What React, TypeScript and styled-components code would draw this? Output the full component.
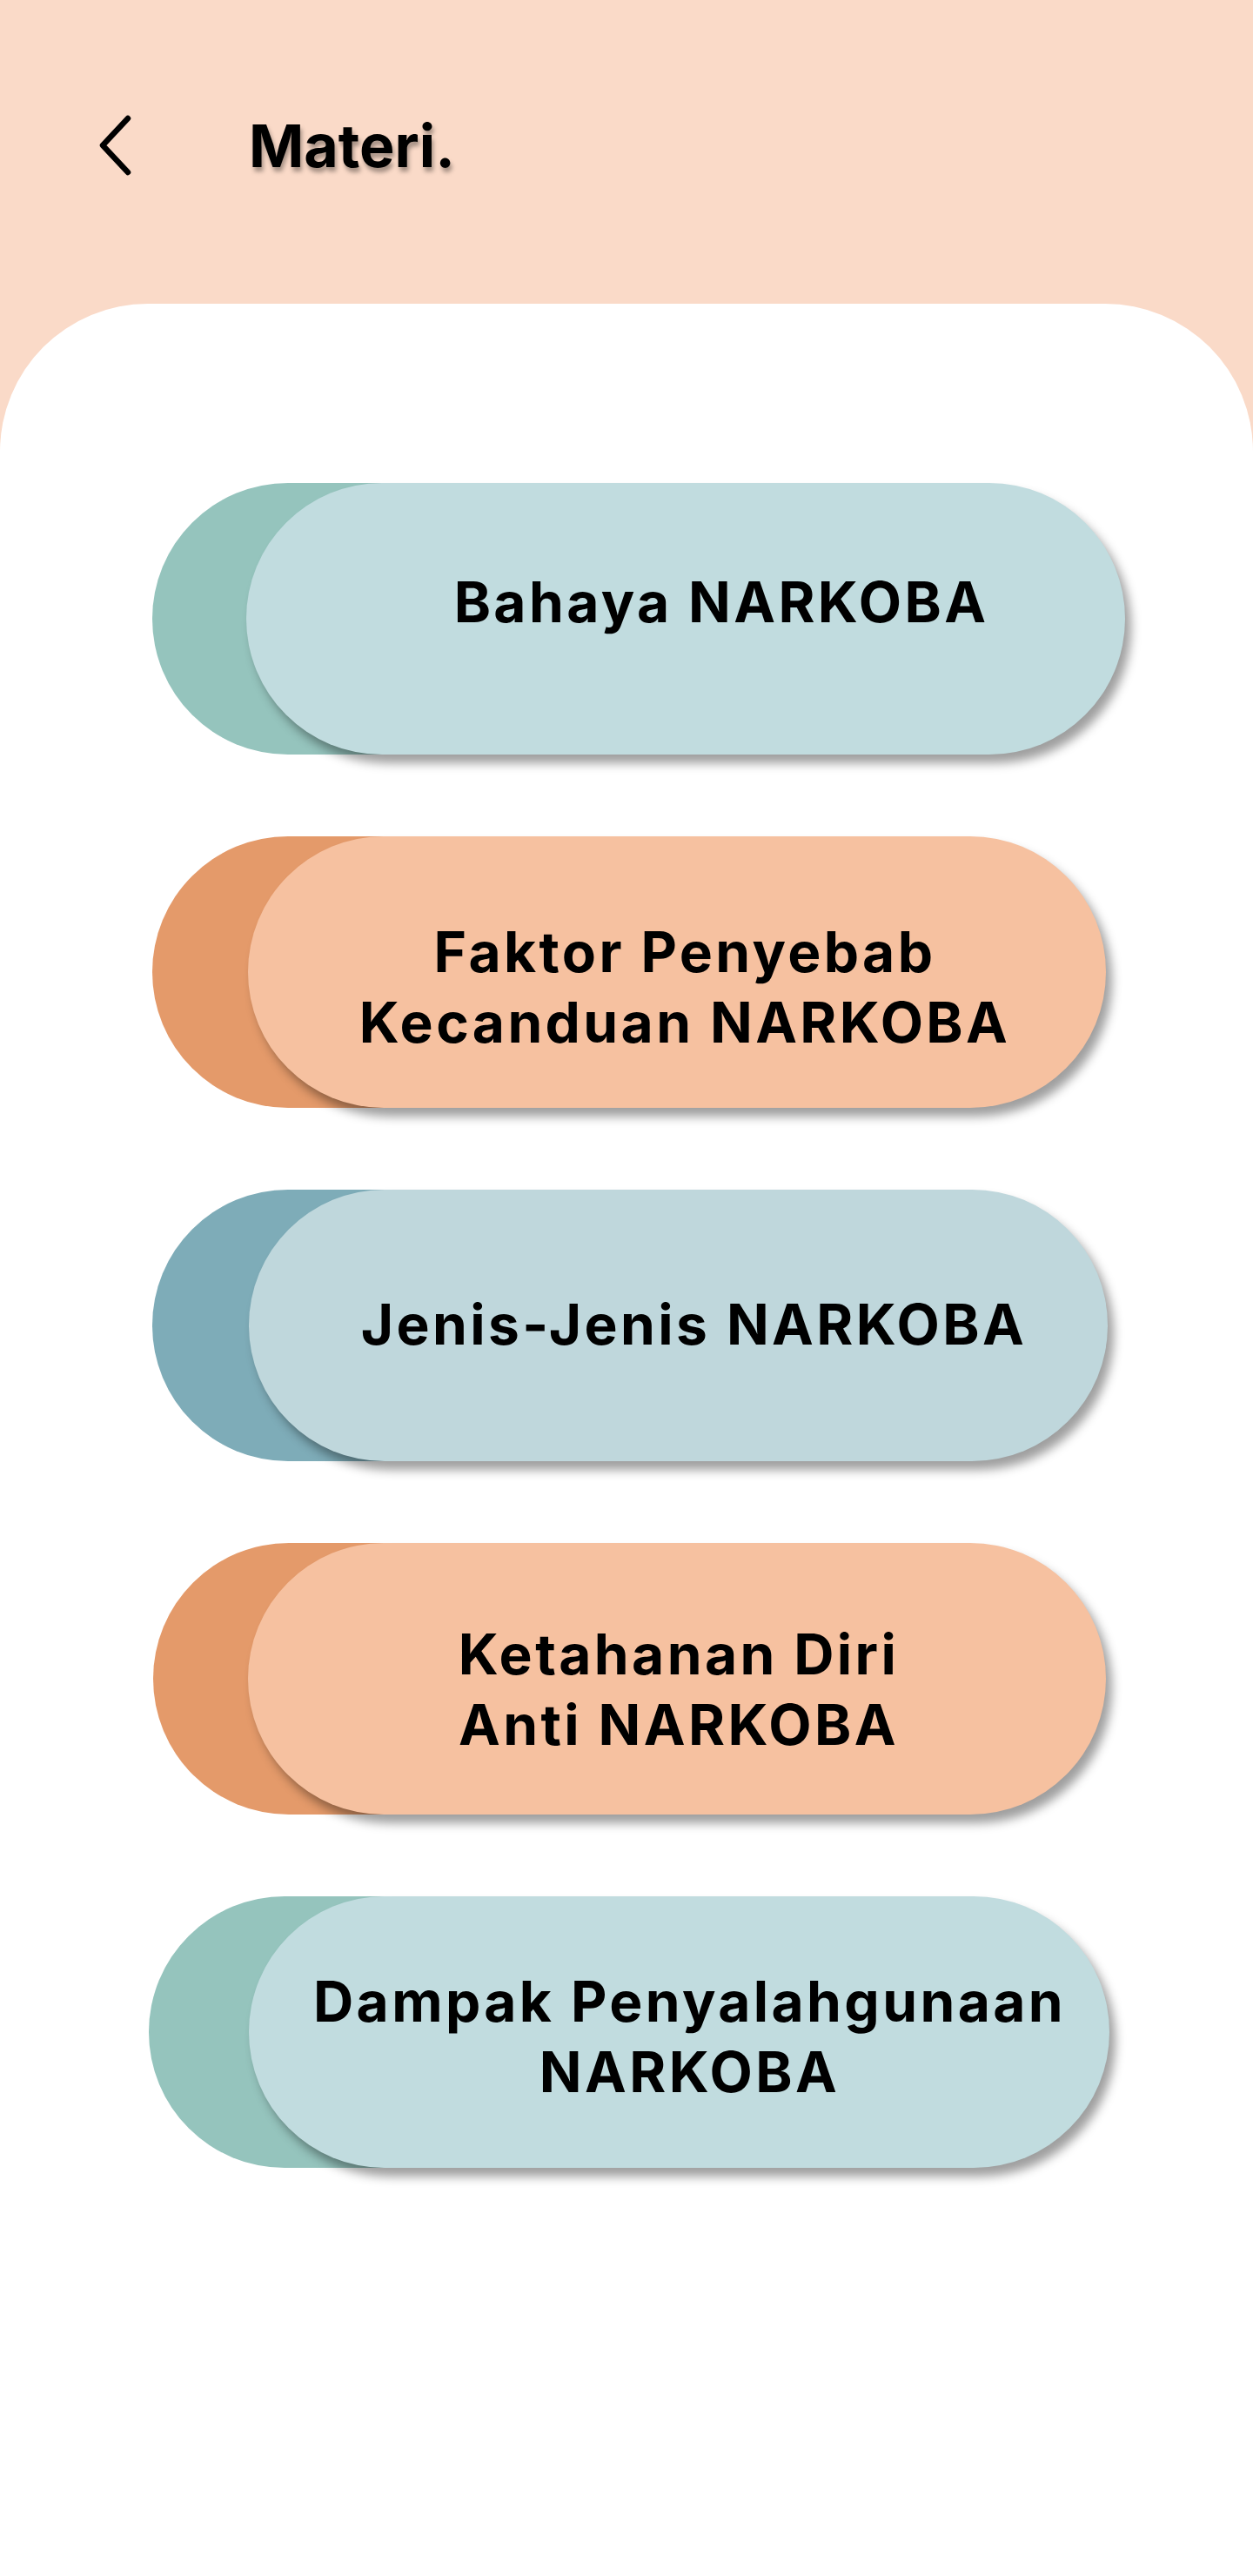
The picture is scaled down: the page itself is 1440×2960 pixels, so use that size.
import React from "react";
import styled, { createGlobalStyle } from "styled-components";

const Global = createGlobalStyle`
  html, body { margin: 0; padding: 0; background: #ffffff; }
  body { font-family: Inter, "Noto Sans", "Liberation Sans", sans-serif; }
  * { box-sizing: border-box; }
`;

const Page = styled.div`
  width: 1440px;
  min-height: 2960px;
  background: #fadac8;
  display: flex;
  flex-direction: column;
`;

const Header = styled.header`
  height: 349px;
  display: flex;
  align-items: flex-start;
  padding: 136px 0 0 109px;
  gap: 131px;
`;

const BackButton = styled.button`
  width: 46px;
  height: 62px;
  padding: 0;
  border: none;
  background: transparent;
  display: flex;
  align-items: center;
  justify-content: center;
  cursor: pointer;
`;

const Title = styled.h1`
  margin: 0;
  font-family: Inter, "Liberation Sans", sans-serif;
  font-weight: 700;
  font-size: 68px;
  line-height: 62px;
  color: #000;
  text-shadow: 2px 5px 5px rgba(0, 0, 0, 0.35);
`;

const Card = styled.main`
  flex: 1;
  background: #ffffff;
  border-radius: 170px 170px 0 0;
  padding: 206px 0 0 0;
  display: flex;
  flex-direction: column;
  gap: 94px;
`;

const Item = styled.a<{ $left: number }>`
  display: grid;
  width: max-content;
  margin-left: ${(p) => p.$left}px;
  text-decoration: none;
  cursor: pointer;
`;

const Back = styled.div<{ $color: string }>`
  grid-area: 1 / 1;
  width: 420px;
  height: 312px;
  border-radius: 156px;
  background: ${(p) => p.$color};
`;

const Front = styled.div<{
  $color: string;
  $inset: number;
  $width: number;
  $dx: number;
  $dy: number;
}>`
  grid-area: 1 / 1;
  margin-left: ${(p) => p.$inset}px;
  width: ${(p) => p.$width}px;
  height: 312px;
  border-radius: 156px;
  background: ${(p) => p.$color};
  box-shadow: 7px 10px 12px rgba(0, 0, 0, 0.38);
  display: flex;
  align-items: center;
  justify-content: center;
  padding-left: ${(p) => Math.max(0, p.$dx * 2)}px;
  padding-right: ${(p) => Math.max(0, -p.$dx * 2)}px;
  padding-top: ${(p) => Math.max(0, p.$dy * 2)}px;
  padding-bottom: ${(p) => Math.max(0, -p.$dy * 2)}px;
`;

const Label = styled.span`
  font-family: Inter, "Liberation Sans", sans-serif;
  font-weight: 700;
  font-size: 64px;
  line-height: 81px;
  letter-spacing: 3.4px;
  color: #000;
  text-align: center;
  white-space: nowrap;
`;

const ChevronLeft = () => (
  <svg width="46" height="70" viewBox="0 0 46 70" fill="none">
    <path
      d="M38 4 L9 35 L38 66"
      stroke="#000"
      strokeWidth="6.5"
      strokeLinecap="round"
      strokeLinejoin="round"
    />
  </svg>
);

type Topic = {
  lines: string[];
  back: string;
  front: string;
  left: number;
  inset: number;
  width: number;
  dx: number;
  dy: number;
};

const teal = { back: "#95c4bd", front: "#c1dcdf" };
const peach = { back: "#e49a6a", front: "#f6c1a0" };
const blue = { back: "#7eacb8", front: "#bfd7dc" };

const topics: Topic[] = [
  { lines: ["Bahaya NARKOBA"], ...teal, left: 175, inset: 108, width: 1010, dx: 41, dy: -20 },
  { lines: ["Faktor Penyebab", "Kecanduan NARKOBA"], ...peach, left: 175, inset: 110, width: 986, dx: 9, dy: 17 },
  { lines: ["Jenis-Jenis NARKOBA"], ...blue, left: 175, inset: 111, width: 987, dx: 18, dy: -2 },
  { lines: ["Ketahanan Diri", "Anti NARKOBA"], ...peach, left: 176, inset: 109, width: 986, dx: 2, dy: 12 },
  { lines: ["Dampak Penyalahgunaan", "NARKOBA"], ...teal, left: 171, inset: 115, width: 989, dx: 12, dy: 5 },
];

export default function App() {
  return (
    <>
      <Global />
      <Page>
        <Header>
          <BackButton aria-label="Kembali">
            <ChevronLeft />
          </BackButton>
          <Title>Materi.</Title>
        </Header>
        <Card>
          {topics.map((t) => (
            <Item key={t.lines.join(" ")} $left={t.left}>
              <Back $color={t.back} />
              <Front
                $color={t.front}
                $inset={t.inset}
                $width={t.width}
                $dx={t.dx}
                $dy={t.dy}
              >
                <Label>
                  {t.lines.map((l, i) => (
                    <React.Fragment key={l}>
                      {i > 0 && <br />}
                      {l}
                    </React.Fragment>
                  ))}
                </Label>
              </Front>
            </Item>
          ))}
        </Card>
      </Page>
    </>
  );
}
